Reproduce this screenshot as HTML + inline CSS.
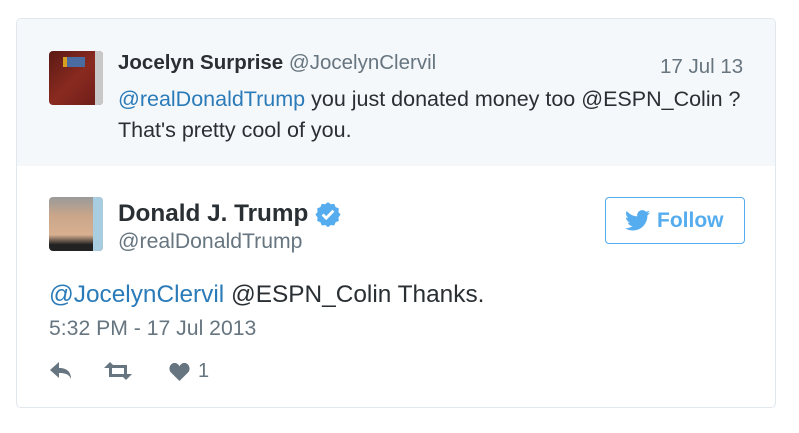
<!DOCTYPE html>
<html><head><meta charset="utf-8"><style>
body{margin:0;background:#fff;font-family:"Liberation Sans",Arial,sans-serif;}
.card{position:absolute;left:16px;top:18px;width:760px;height:390px;border:1px solid #e1e8ed;border-radius:5px;overflow:hidden;box-sizing:border-box;}
.q{position:absolute;left:0;top:0;right:0;height:147px;background:#f5f8fa;}
.av{position:absolute;border-radius:4px;overflow:hidden}
.t{position:absolute;white-space:nowrap}
.link{color:#2b7bb9}
</style></head><body>
<div class="card">
<div class="q"></div>
<div class="av" style="left:32px;top:32px;width:54px;height:54px;background:linear-gradient(135deg,#5a1a14,#8a2a20 50%,#6a1c18);">
<div style="position:absolute;left:16px;top:6px;width:20px;height:10px;background:#4a6ca0"></div>
<div style="position:absolute;left:14px;top:6px;width:4px;height:10px;background:#d4a020"></div>
<div style="position:absolute;right:0;top:0;width:8px;height:54px;background:#c8c8c8"></div></div>
<div class="t" style="left:101px;top:32px;font-size:20.5px;color:#292f33"><b>Jocelyn Surprise</b> <span style="color:#66757f">@JocelynClervil</span></div>
<div class="t" style="left:643px;top:36px;font-size:20.5px;color:#66757f">17 Jul 13</div>
<div class="t" style="left:101px;top:65px;font-size:21.5px;color:#292f33;line-height:31px"><span class="link">@realDonaldTrump</span> you just donated money too @ESPN_Colin ?<br>That's pretty cool of you.</div>

<div class="av" style="left:32px;top:178px;width:54px;height:54px;background:linear-gradient(180deg,#9a9a9a 0,#caa68a 35%,#d8b090 70%,#222 88%);">
<div style="position:absolute;right:0;top:0;width:10px;height:54px;background:#a8cce0"></div></div>
<div class="t" style="left:101px;top:181px;font-size:24.3px;font-weight:bold;color:#292f33">Donald J. Trump</div>
<svg style="position:absolute;left:298px;top:182px" width="26" height="26" viewBox="0 0 24 24"><path fill="#55acee" d="M12 1l2.6 2 3.2-.4 1.2 3 3 1.2-.4 3.2 2 2.6-2 2.6.4 3.2-3 1.2-1.2 3-3.2-.4-2.6 2-2.6-2-3.2.4-1.2-3-3-1.2.4-3.2-2-2.6 2-2.6-.4-3.2 3-1.2 1.2-3 3.2.4z"/><path d="M7 12.5l3.3 3.3L17 9" stroke="#fff" stroke-width="2.6" fill="none"/></svg>
<div class="t" style="left:101px;top:211px;font-size:21.2px;color:#66757f">@realDonaldTrump</div>
<div style="position:absolute;left:588px;top:178px;width:140px;height:47px;border:1px solid #55acee;border-radius:4px;box-sizing:border-box"></div>
<svg style="position:absolute;left:608px;top:191px" width="25" height="21" viewBox="0 0 24 20"><path fill="#55acee" d="M24 2.4c-.9.4-1.8.6-2.8.8 1-.6 1.8-1.6 2.2-2.7-1 .6-2 1-3.1 1.2C19.3.6 18 0 16.6 0c-2.7 0-4.9 2.2-4.9 4.9 0 .4 0 .8.1 1.1C7.7 5.8 4.1 3.9 1.7.9c-.4.7-.7 1.6-.7 2.5 0 1.7.9 3.2 2.2 4.1-.8 0-1.600-.2-2.2-.6v.1c0 2.4 1.7 4.4 3.9 4.8-.4.1-.8.2-1.3.2-.3 0-.6 0-.9-.1.6 2 2.4 3.4 4.6 3.4-1.700 1.300-3.800 2.100-6.100 2.100-.4 0-.8 0-1.2-.1C2.2 18.8 4.8 19.6 7.5 19.6c9.1 0 14-7.5 14-14v-.6c1-.7 1.8-1.600 2.5-2.600z"/></svg>
<div class="t" style="left:640px;top:190px;font-size:21px;font-weight:bold;color:#55acee">Follow</div>

<div class="t" style="left:32px;top:262px;font-size:24.4px;color:#292f33"><span class="link">@JocelynClervil</span> @ESPN_Colin Thanks.</div>
<div class="t" style="left:32px;top:298px;font-size:21.2px;color:#66757f">5:32 PM - 17 Jul 2013</div>
<svg style="position:absolute;left:33px;top:343px" width="24" height="18" viewBox="0 0 24 18"><path fill="#66757f" d="M9 0L0 8l9 8v-5c6 0 10 1 12 6 0-7-4-11-12-11z"/></svg>
<svg style="position:absolute;left:87px;top:343px" width="28" height="18" viewBox="0 0 28 18"><path fill="#66757f" d="M6 0l6 6H8v6h8l3 3H5V6H0z M22 18l-6-6h4V6h-8L9 3h14v9h5z"/></svg>
<svg style="position:absolute;left:152px;top:343px" width="21" height="19" viewBox="0 0 24 22"><path fill="#66757f" d="M12 22L2 12C-1 9 0 2 6 1c3 0 5 2 6 4 1-2 3-4 6-4 6 1 7 8 4 11z"/></svg>
<div class="t" style="left:181px;top:341px;font-size:20px;color:#66757f">1</div>
</div>
</body></html>
